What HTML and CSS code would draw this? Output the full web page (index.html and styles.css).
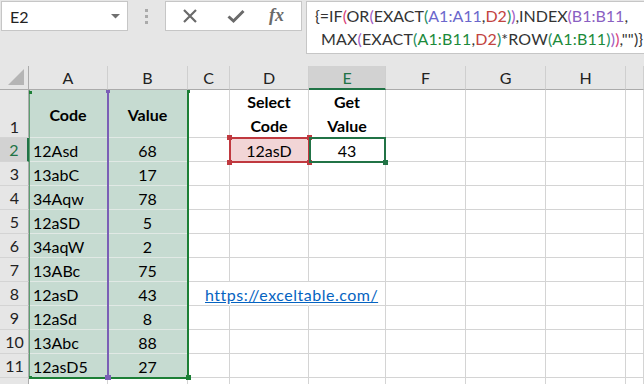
FILE: index.html
```
<!DOCTYPE html>
<html>
<head>
<meta charset="utf-8">
<link rel="stylesheet" href="styles.css">
</head>
<body>
<div class="app">
  <div class="toolbar">
    <div class="namebox">
      <span class="nb-text">E2</span>
      <svg class="nb-arrow" width="9" height="5" viewBox="0 0 9 5"><polygon points="0,0 9,0 4.5,4.5" fill="#707070"/></svg>
    </div>
    <div class="dots"><span></span><span></span><span></span></div>
    <div class="buttons">
      <svg class="ic-x" width="16" height="16" viewBox="0 0 16 16"><path d="M2 2 L14 14 M14 2 L2 14" stroke="#6a6a6a" stroke-width="2.2" fill="none"/></svg>
      <svg class="ic-check" width="18" height="16" viewBox="0 0 18 16"><path d="M1.5 8.5 L6.5 13 L16.5 3" stroke="#6a6a6a" stroke-width="3" fill="none"/></svg>
      <span class="ic-fx">fx</span>
    </div>
    <div class="formula">
      <div class="fline">{=IF<span class="p2">(</span>OR<span class="p3">(</span>EXACT<span class="p4">(</span><span class="r1">A1:A11</span>,<span class="r2">D2</span><span class="p4">)</span><span class="p3">)</span>,INDEX<span class="p3">(</span><span class="r3">B1:B11</span>,</div>
      <div class="fline ind">MAX<span class="p3">(</span>EXACT<span class="p4">(</span><span class="r4">A1:B11</span>,<span class="r2">D2</span><span class="p4">)</span>*ROW<span class="p4">(</span><span class="r4">A1:B11</span><span class="p4">)</span><span class="p3">)</span><span class="p2">)</span>,""<span class="p1">)</span>}</div>
    </div>
  </div>

  <div class="sheet">
    <div class="grid">
      <div class="corner"><svg width="17" height="17" viewBox="0 0 17 17"><polygon points="0,16 16,16 16,0" fill="#b5b5b5"/></svg></div>
      <div class="hd">A</div><div class="hd">B</div><div class="hd">C</div><div class="hd">D</div><div class="hd sel">E</div><div class="hd">F</div><div class="hd">G</div><div class="hd">H</div><div class="hd"></div>

      <div class="rh bottom">1</div><div class="c fill b ctr">Code</div><div class="c fill b ctr">Value</div><div class="c"></div><div class="c b ctr two">Select<br>Code</div><div class="c b ctr two">Get<br>Value</div><div class="c"></div><div class="c"></div><div class="c"></div><div class="c"></div>

      <div class="rh sel">2</div><div class="c fill l">12Asd</div><div class="c fill ctr">68</div><div class="c"></div><div class="c ctr pink">12asD</div><div class="c ctr">43</div><div class="c"></div><div class="c"></div><div class="c"></div><div class="c"></div>

      <div class="rh">3</div><div class="c fill l">13abC</div><div class="c fill ctr">17</div><div class="c"></div><div class="c"></div><div class="c"></div><div class="c"></div><div class="c"></div><div class="c"></div><div class="c"></div>

      <div class="rh">4</div><div class="c fill l">34Aqw</div><div class="c fill ctr">78</div><div class="c"></div><div class="c"></div><div class="c"></div><div class="c"></div><div class="c"></div><div class="c"></div><div class="c"></div>

      <div class="rh">5</div><div class="c fill l">12aSD</div><div class="c fill ctr">5</div><div class="c"></div><div class="c"></div><div class="c"></div><div class="c"></div><div class="c"></div><div class="c"></div><div class="c"></div>

      <div class="rh">6</div><div class="c fill l">34aqW</div><div class="c fill ctr">2</div><div class="c"></div><div class="c"></div><div class="c"></div><div class="c"></div><div class="c"></div><div class="c"></div><div class="c"></div>

      <div class="rh">7</div><div class="c fill l">13ABc</div><div class="c fill ctr">75</div><div class="c"></div><div class="c"></div><div class="c"></div><div class="c"></div><div class="c"></div><div class="c"></div><div class="c"></div>

      <div class="rh">8</div><div class="c fill l">12asD</div><div class="c fill ctr">43</div><div class="c nob"><a class="link">https://exceltable.com/</a></div><div class="c nob"></div><div class="c"></div><div class="c"></div><div class="c"></div><div class="c"></div><div class="c"></div>

      <div class="rh">9</div><div class="c fill l">12aSd</div><div class="c fill ctr">8</div><div class="c"></div><div class="c"></div><div class="c"></div><div class="c"></div><div class="c"></div><div class="c"></div><div class="c"></div>

      <div class="rh">10</div><div class="c fill l">13Abc</div><div class="c fill ctr">88</div><div class="c"></div><div class="c"></div><div class="c"></div><div class="c"></div><div class="c"></div><div class="c"></div><div class="c"></div>

      <div class="rh">11</div><div class="c fill l">12asD5</div><div class="c fill ctr">27</div><div class="c"></div><div class="c"></div><div class="c"></div><div class="c"></div><div class="c"></div><div class="c"></div><div class="c"></div>

      <div class="rh"></div><div class="c"></div><div class="c"></div><div class="c"></div><div class="c"></div><div class="c"></div><div class="c"></div><div class="c"></div><div class="c"></div><div class="c"></div>
    </div>

    <div class="hl hl-left"></div>
    <div class="hl hl-right"></div>
    <div class="hl hl-bottom"></div>
    <div class="hl hl-mid"></div>
    <div class="sq sq-tl"></div>
    <div class="sq sq-tm"></div>
    <div class="sq sq-tr"></div>
    <div class="sq sq-bl"></div>
    <div class="sq sq-bm"></div>
    <div class="sq sq-br"></div>

    <div class="box-d2"></div>
    <div class="sq red r-tl"></div>
    <div class="sq red r-tr"></div>
    <div class="sq red r-bl"></div>
    <div class="sq red r-br"></div>
    <div class="box-e2"></div>
    <div class="sq handle"></div>
  </div>
</div>
</body>
</html>
```

FILE: styles.css
```
* { box-sizing: border-box; }
html, body { margin: 0; padding: 0; }
body {
  width: 644px;
  height: 384px;
  overflow: hidden;
  background: #ffffff;
  font-family: Lato, "Noto Sans", sans-serif;
  color: #000;
}
.app { width: 644px; height: 384px; overflow: hidden; }

/* toolbar */
.toolbar {
  height: 66px;
  background: #e6e6e6;
  display: flex;
  align-items: flex-start;
  padding-top: 1px;
  padding-left: 1px;
}
.namebox {
  width: 127px;
  height: 30px;
  background: #fff;
  border: 1px solid #c6c6c6;
  display: flex;
  align-items: center;
  justify-content: space-between;
  padding: 0 7px 0 8px;
}
.nb-text { font-size: 16px; color: #222; }
.nb-arrow { margin-top: 1px; }
.dots {
  width: 37px;
  height: 30px;
  display: flex;
  flex-direction: column;
  align-items: center;
  justify-content: center;
  gap: 3px;
}
.dots span { width: 3px; height: 3px; background: #aaaaaa; display: block; }
.buttons {
  width: 137px;
  height: 30px;
  background: #fff;
  border: 1px solid #c6c6c6;
  display: flex;
  align-items: center;
  padding-left: 16px;
}
.ic-x { margin-right: 29px; }
.ic-check { margin-right: 24px; }
.ic-fx {
  font-family: "Liberation Serif", serif;
  font-style: italic;
  font-weight: bold;
  font-size: 18px;
  color: #6a6a6a;
  margin-top: -2px;
}
.formula {
  margin-left: 4px;
  flex: 1;
  height: 53px;
  background: #fff;
  border: 1px solid #c6c6c6;
  border-right: none;
  padding: 2px 0 0 8px;
  font-size: 16px;
  color: #333;
  white-space: nowrap;
  overflow: hidden;
}
.fline { height: 23px; line-height: 23px; }
.fline.ind { padding-left: 6px; letter-spacing: 0.15px; }
.p1 { color: #333; }
.p2 { color: #d9417a; }
.p3 { color: #a05cc4; }
.p4 { color: #1f8f5f; }
.r1 { color: #6b67cc; }
.r2 { color: #c2443f; }
.r3 { color: #8a5fc2; }
.r4 { color: #1c8a3a; }

/* sheet */
.sheet { position: relative; height: 318px; overflow: hidden; }
.grid {
  display: grid;
  grid-template-columns: 29px 79px 80px 42px 79px 77px 80px 80px 80px 18px;
  grid-template-rows: 24px 48px repeat(11, 24px);
}
.corner {
  background: #e6e6e6;
  border-right: 1px solid #ababab;
  border-bottom: 1px solid #ababab;
  display: flex;
  align-items: flex-end;
  justify-content: flex-end;
  padding: 0 3px 3px 0;
}
.hd {
  background: #e6e6e6;
  border-right: 1px solid #cfcfcf;
  border-bottom: 1px solid #ababab;
  display: flex;
  align-items: center;
  justify-content: center;
  font-size: 16px;
  color: #222;
}
.hd.sel {
  background: #d2d2d2;
  color: #217346;
  border-bottom: 2px solid #217346;
}
.rh {
  background: #e6e6e6;
  border-right: 1px solid #ababab;
  border-bottom: 1px solid #d4d4d4;
  display: flex;
  align-items: center;
  justify-content: center;
  font-size: 16px;
  color: #222;
  padding-left: 1px;
}
.rh.bottom { align-items: flex-end; padding-bottom: 1px; }
.rh.sel {
  background: #d2d2d2;
  color: #217346;
  border-right: 2px solid #217346;
}
.c {
  border-right: 1px solid #d4d4d4;
  border-bottom: 1px solid #d4d4d4;
  display: flex;
  align-items: center;
  font-size: 16px;
  white-space: nowrap;
  padding-top: 1px;
}
.c.nob { border-right-color: #ffffff; }
.fill { background: #c6dbd1; border-color: #e1e9e5; }
.b { font-weight: bold; }
.ctr { justify-content: center; text-align: center; }
.l { padding-left: 4px; }
.two { line-height: 24px; }
.pink { background: #f2d5d6; }
.link {
  color: #0563c1;
  text-decoration: underline;
  margin-left: 17px;
  letter-spacing: 0.5px;
  position: relative;
  z-index: 1;
}

/* reference highlights */
.hl, .sq, .box-d2, .box-e2 { position: absolute; }
.hl-left { left: 29px; top: 24px; width: 1px; height: 288px; background: #5e9e72; }
.hl-right { left: 187px; top: 24px; width: 2px; height: 289px; background: #1c7f36; }
.hl-bottom { left: 29px; top: 311px; width: 160px; height: 2px; background: #1c7f36; }
.hl-mid { left: 107px; top: 24px; width: 2px; height: 288px; background: #7a5fb6; }
.sq { width: 5px; height: 5px; background: #1c7f36; }
.sq-tl { left: 29px; top: 25px; width: 3px; height: 3px; }
.sq-tm { left: 106px; top: 24px; width: 4px; height: 3px; background: #7a5fb6; }
.sq-tr { left: 187px; top: 24px; width: 3px; height: 3px; }
.sq-bl { left: 29px; top: 310px; width: 3px; height: 3px; }
.sq-bm { left: 105px; top: 309px; width: 6px; height: 5px; background: #7a5fb6; }
.sq-br { left: 186px; top: 309px; width: 5px; height: 5px; }

.box-d2 { left: 229px; top: 71px; width: 81px; height: 26px; border: 2px solid #c0393f; }
.sq.red { background: #c0393f; }
.r-tl { left: 227px; top: 69px; }
.r-tr { left: 307px; top: 69px; }
.r-bl { left: 227px; top: 94px; }
.r-br { left: 307px; top: 94px; }
.box-e2 { left: 309px; top: 71px; width: 77px; height: 26px; border: 2px solid #217346; }
.handle { left: 383px; top: 94px; background: #217346; }
```
